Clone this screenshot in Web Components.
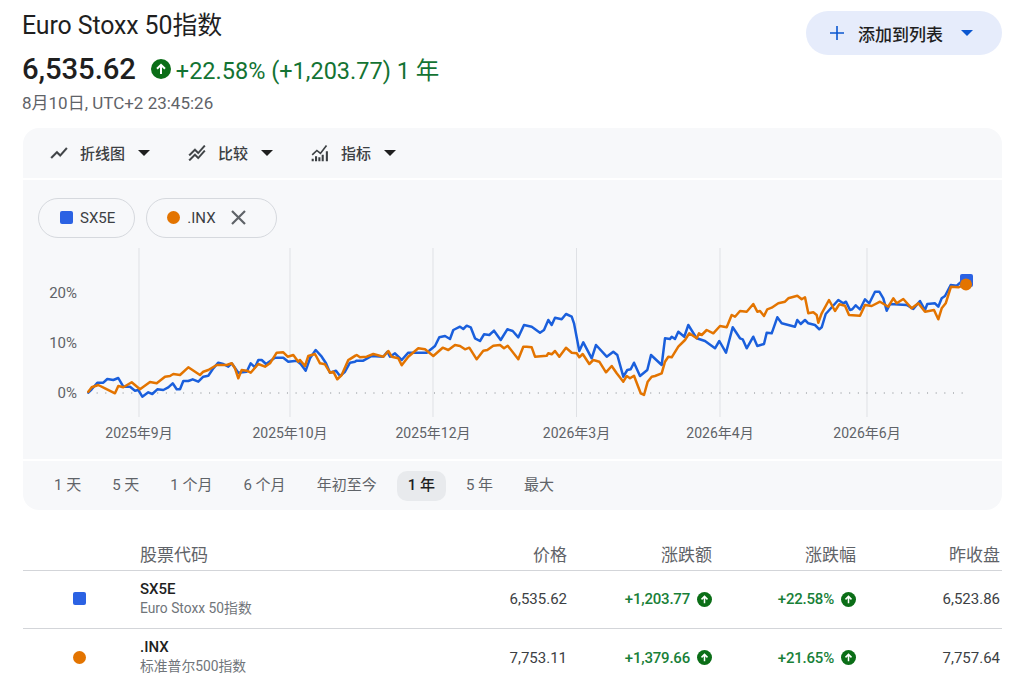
<!DOCTYPE html>
<html lang="zh">
<head>
<meta charset="utf-8">
<title>Euro Stoxx 50</title>
<style>
  html, body { margin: 0; background: #fff; }
  body { font-family: Roboto, "Noto Sans CJK SC", sans-serif; color: #1f1f1f; overflow: hidden; }
</style>
</head>
<body>
<quote-page>
  <quote-header></quote-header>
  <chart-panel></chart-panel>
  <compare-table>
    <compare-row symbol="SX5E" name="Euro Stoxx 50指数" price="6,535.62" change="+1,203.77" pct="+22.58%" close="6,523.86" color="#2b62e3" shape="square"></compare-row>
    <compare-row symbol=".INX" name="标准普尔500指数" price="7,753.11" change="+1,379.66" pct="+21.65%" close="7,757.64" color="#e37400" shape="circle"></compare-row>
  </compare-table>
</quote-page>

<script>
(function () {
  'use strict';

  const FONT = 'Roboto, "Noto Sans CJK SC", sans-serif';
  const upIcon = size => `<svg width="${size}" height="${size}" viewBox="0 0 20 20" style="flex:none;display:block"><circle cx="10" cy="10" r="10" fill="#0b6e17"/><path d="M10 15V6.4M6 9.8l4-4 4 4" fill="none" stroke="#fff" stroke-width="2"/></svg>`;
  const caret = (color = '#1f1f1f') => `<svg width="12" height="6" viewBox="0 0 12 6"><path d="M0 0h12L6 6z" fill="${color}"/></svg>`;

  class Base extends HTMLElement {
    constructor() {
      super();
      this.attachShadow({mode: 'open'});
    }
    connectedCallback() {
      this.shadowRoot.innerHTML = this.render();
    }
  }

  class QuotePage extends Base {
    render() {
      return `<style>
        :host { display: block; width: 1024px; height: 687px; overflow: hidden; box-sizing: border-box; padding: 0 22px 0 23px; }
      </style><slot></slot>`;
    }
  }

  class QuoteHeader extends Base {
    render() {
      return `<style>
        :host { display: flex; justify-content: space-between; height: 128px; font-family: ${FONT}; }
        .title { font-size: 24.9px; line-height: 28px; margin: 12px 0 0 -1px; letter-spacing: -.1px; }
        .quote { display: flex; align-items: center; margin: 13px 0 0 -1px; height: 32px; }
        .price { font-size: 29.3px; font-weight: 500; letter-spacing: -.1px; margin-right: 15px; }
        .delta { font-size: 23.5px; color: #137333; margin-left: 5px; white-space: nowrap; }
        .time { font-size: 17px; color: #5f6368; margin: 8px 0 0 -1px; line-height: 20px; }
        .add { display: flex; align-items: center; height: 44px; width: 196px; box-sizing: border-box; margin: 11px 0 0; padding-left: 24px; background: #e6ecfb; border-radius: 22px; font-size: 17px; font-weight: 500; color: #1f1f1f; }
        .add span { margin: 0 18px 0 14px; }
      </style>
      <div>
        <div class="title">Euro Stoxx 50指数</div>
        <div class="quote"><span class="price">6,535.62</span>${upIcon(20)}<span class="delta">+22.58% (+1,203.77) 1 年</span></div>
        <div class="time">8月10日, UTC+2 23:45:26</div>
      </div>
      <div class="add">
        <svg width="14" height="14" viewBox="0 0 14 14"><path d="M7 0v14M0 7h14" stroke="#0b57d0" stroke-width="1.6"/></svg>
        <span>添加到列表</span>${caret('#0b57d0')}
      </div>`;
    }
  }

  // traced from the picture, in crop coords: [x offset, y offset, points]
  const BLUE = [
    [20, 180, '205,638 215,628 232,608 250,608 262,597 280,600 295,594 310,620 330,620 345,632 355,630 367,650 385,637 397,642 412,628 430,630 445,622 458,610 470,628 480,628 490,603 505,603 518,598 535,605 550,590 565,587 580,565 595,548 610,552 625,560 635,550 655,578 680,575 692,550 705,562 715,540 725,540 738,552 765,533 790,533 805,545 830,542 842,552 857,572 870,535 887,510 905,530 918,550 930,578 948,572 960,588 975,575 990,548 1005,545'],
    [350, 240, '20,362 40,362 65,348 100,350 112,335 120,350 135,340 155,360 175,338 230,338 255,318 268,292 285,288 300,297 310,270 330,260 340,267 350,257 362,262 375,295 390,303 402,283 418,285 432,272 452,300 472,268 488,273 505,292 522,255 545,260 570,278 582,270 595,240 605,255 615,233 635,238 648,222 665,230 672,250 688,333 700,307 725,355 738,315 770,350 790,335 802,345 820,410 832,390 842,388 852,368 870,408 892,390 903,345 935,375 945,295 960,297 965,290 975,297 985,275 1003,290'],
    [680, 240, '25,255 50,295 75,303 105,325 118,303 138,338 158,262 180,295 188,298 200,325 220,290 232,318 252,312 260,278 275,280 292,232 305,250 345,260 352,240 362,252 375,240 385,250 405,255 418,268 425,262 437,222 475,180 490,190 498,185 510,210 517,208 527,196 540,208 555,178 568,190 585,155 598,155 610,175 620,212 630,192 680,195 700,207 720,183 735,210 742,192 765,190 775,200 785,175 795,168 812,135 830,137 850,120']
  ];
  const ORANGE = [
    [20, 180, '205,635 215,622 235,615 255,625 285,640 295,618 310,622 335,607 360,628 390,606 410,610 435,590 450,588 460,582 480,585 505,562 540,585 550,575 565,570 590,555 620,555 635,550 645,565 655,595 665,570 680,572 692,578 715,552 735,560 750,550 770,518 790,517 803,530 820,525 835,545 840,540 855,558 865,528 885,522 900,550 915,553 930,578 940,575 952,598 965,585 985,540 1005,527'],
    [350, 240, '0,358 20,345 30,352 50,350 70,342 100,350 115,333 125,350 145,355 155,376 175,350 205,325 225,328 250,348 278,323 295,330 315,315 330,318 345,328 358,323 380,358 400,332 412,330 430,317 450,315 462,325 473,317 505,358 520,320 530,320 545,322 555,350 590,347 595,340 605,343 615,333 628,350 648,323 665,338 680,340 688,352 698,342 718,372 730,360 748,365 768,397 785,378 800,400 820,425 830,408 840,415 852,407 872,460 882,465 893,425 905,410 915,408 935,400 945,365 955,350 965,352 985,320 1005,300'],
    [680, 240, '15,300 28,280 50,295 57,280 65,285 80,270 100,280 120,258 140,262 155,225 165,230 180,213 200,215 220,192 232,215 240,213 252,228 262,208 275,203 295,190 315,185 325,175 352,167 365,178 375,172 385,220 400,217 410,225 415,248 425,220 447,180 465,213 478,193 495,197 507,225 540,227 555,195 575,198 600,185 625,200 640,175 650,190 670,177 695,205 715,190 735,215 762,210 775,238 785,205 797,190 813,140 835,142 858,133']
  ];
  const toPoints = segments => segments.map(([ox, oy, pts]) =>
    pts.split(' ').map(p => {
      const [x, y] = p.split(',').map(Number);
      return `${(ox + x / 3).toFixed(1)},${(oy + y / 3).toFixed(1)}`;
    }).join(' ')).join(' ');

  class ChartPanel extends Base {
    render() {
      const months = [[139, '2025年9月'], [290, '2025年10月'], [433, '2025年12月'], [576.5, '2026年3月'], [720, '2026年4月'], [867, '2026年6月']];
      const ticks = [[293, '20%'], [343, '10%'], [393, '0%']];
      const ranges = ['1 天', '5 天', '1 个月', '6 个月', '年初至今', '1 年', '5 年', '最大'];
      return `<style>
        :host { display: flex; flex-direction: column; gap: 2px; height: 382px; font-family: ${FONT}; }
        section { background: #f7f8fa; }
        .tools { display: flex; align-items: center; height: 50px; padding-left: 26px; border-radius: 16px 16px 0 0; }
        .tool { display: flex; align-items: center; font-size: 15px; font-weight: 500; color: #3c4043; margin-right: 37px; }
        .tool span { margin: 0 13px 0 11px; }
        .tool svg:first-child { width: 20px; height: 20px; }
        .plot { height: 279px; display: flex; flex-direction: column; }
        .chips { display: flex; gap: 11px; padding: 18px 0 0 15px; height: 40px; }
        .chip { display: flex; align-items: center; box-sizing: border-box; height: 40px; border: 1px solid #d6d9de; border-radius: 20px; font-size: 15px; color: #3c4043; }
        .chip i { display: block; width: 13px; height: 13px; margin: 0 7px 0 0; }
        svg.chart { display: block; width: 979px; height: 221px; }
        svg.chart text { font-family: ${FONT}; font-size: 14px; fill: #5f6368; }
        svg.chart text.tick { font-size: 15px; }
        .range { display: flex; align-items: center; gap: 9px; height: 49px; padding: 1px 0 0 20px; border-radius: 0 0 16px 16px; font-size: 15px; color: #5f6368; }
        .range span { padding: 0 11px; height: 30px; line-height: 29px; border-radius: 10px; white-space: nowrap; }
        .range .on { background: #e8eaed; color: #1f1f1f; font-weight: 500; }
      </style>
      <section class="tools">
        <div class="tool"><svg viewBox="0 0 24 24"><path fill="#3c4043" stroke="#3c4043" stroke-width=".5" d="M3.5 18.49l6-6.01 4 4L22 6.92l-1.41-1.41-7.09 7.97-4-4L2 16.99z"/></svg><span>折线图</span>${caret()}</div>
        <div class="tool"><svg viewBox="0 0 24 24"><path fill="#3c4043" stroke="#3c4043" stroke-width=".3" d="M2 19.99l7.5-7.51 4 4 7.09-7.97L22 9.92l-8.5 9.56-4-4-6 6.01-1.5-1.5zm1.5-4.5l6-6.01 4 4L22 3.92l-1.41-1.41-7.09 7.97-4-4L2 13.99l1.5 1.5z"/></svg><span>比较</span>${caret()}</div>
        <div class="tool"><svg viewBox="0 0 24 24"><path fill="#3c4043" d="M2 19h2.5v3H2zm4-3h2.5v6H6zm4 1h2.5v5H10zm4-3h2.5v8H14zm5-4h2.5v12H19zM2 13.4l6.2-5.6 4.2 3.4L19 2.5l1.6 1.2-7.9 10.2-4.4-3.6-5 4.6z"/></svg><span>指标</span>${caret()}</div>
      </section>
      <section class="plot">
        <div class="chips">
          <div class="chip" style="padding:0 19px 0 21px"><i style="background:#2b62e3;border-radius:2px"></i>SX5E</div>
          <div class="chip" style="padding:0 30px 0 20px"><i style="background:#e37400;border-radius:50%"></i>.INX<svg width="15" height="15" viewBox="0 0 15 15" style="margin-left:15px"><path d="M1 1l13 13M14 1L1 14" stroke="#5f6368" stroke-width="2.2"/></svg></div>
        </div>
        <svg class="chart" viewBox="23 238 979 221">
          ${months.map(m => `<line x1="${m[0]}" x2="${m[0]}" y1="248" y2="417" stroke="#dfe1e5"/>`).join('')}
          <line x1="88" x2="966" y1="393" y2="393" stroke="#80868b" stroke-width="1" stroke-dasharray="1 7.65"/>
          ${ticks.map(t => `<text class="tick" x="77" y="${t[0] + 5}" text-anchor="end">${t[1]}</text>`).join('')}
          ${months.map(m => `<text x="${m[0]}" y="438" text-anchor="middle">${m[1]}</text>`).join('')}
          <polyline points="${toPoints(BLUE)}" fill="none" stroke="#1a5fdc" stroke-width="2.5" stroke-linejoin="round" stroke-linecap="round"/>
          <polyline points="${toPoints(ORANGE)}" fill="none" stroke="#e37400" stroke-width="2.5" stroke-linejoin="round" stroke-linecap="round"/>
          <rect x="960" y="274" width="13" height="13" rx="2" fill="#2b62e3"/>
          <circle cx="966" cy="284.5" r="6" fill="#e37400"/>
        </svg>
      </section>
      <section class="range">${ranges.map(r => `<span class="${r === '1 年' ? 'on' : ''}">${r}</span>`).join('')}</section>`;
    }
  }

  const GRID = 'grid-template-columns: 117px 282px 145px 145px 144px 146px';

  class CompareTable extends Base {
    render() {
      return `<style>
        :host { display: block; font-family: ${FONT}; }
        .head { display: grid; ${GRID}; height: 61px; box-sizing: border-box; padding-top: 35px; font-size: 17px; line-height: 20px; color: #5f6368; border-bottom: 1px solid #d3d5d9; }
        .head div:nth-child(n+3) { text-align: right; }
        .head div:last-child { padding-right: 2px; }
      </style>
      <div class="head"><div></div><div>股票代码</div><div>价格</div><div>涨跌额</div><div>涨跌幅</div><div>昨收盘</div></div>
      <slot></slot>`;
    }
  }

  class CompareRow extends Base {
    render() {
      const a = n => this.getAttribute(n);
      return `<style>
        :host { display: grid; ${GRID}; height: 58px; box-sizing: border-box; border-bottom: 1px solid #d3d5d9; align-items: center; font-family: ${FONT}; font-size: 15px; color: #3c4043; }
        :host(:last-child) { border-bottom: 0; }
        .mark { width: 13px; height: 13px; margin: 0 0 2px 50px; background: ${a('color')}; border-radius: ${a('shape') === 'circle' ? '50%' : '2px'}; }
        .label { padding-bottom: 2px; }
        .sym { font-size: 15px; font-weight: 500; color: #1f1f1f; line-height: 19px; }
        .name { font-size: 13.8px; color: #70757a; line-height: 19px; white-space: nowrap; }
        .num { display: flex; justify-content: flex-end; align-items: center; gap: 7px; white-space: nowrap; padding-bottom: 1px; }
        .up { color: #188038; font-weight: 500; letter-spacing: -.2px; }
        .num:last-child { padding-right: 2px; }
      </style>
      <div class="mark"></div>
      <div class="label"><div class="sym">${a('symbol')}</div><div class="name">${a('name')}</div></div>
      <div class="num">${a('price')}</div>
      <div class="num up">${a('change')}${upIcon(15)}</div>
      <div class="num up">${a('pct')}${upIcon(15)}</div>
      <div class="num">${a('close')}</div>`;
    }
  }

  customElements.define('quote-page', QuotePage);
  customElements.define('quote-header', QuoteHeader);
  customElements.define('chart-panel', ChartPanel);
  customElements.define('compare-table', CompareTable);
  customElements.define('compare-row', CompareRow);
}());
</script>
</body>
</html>
